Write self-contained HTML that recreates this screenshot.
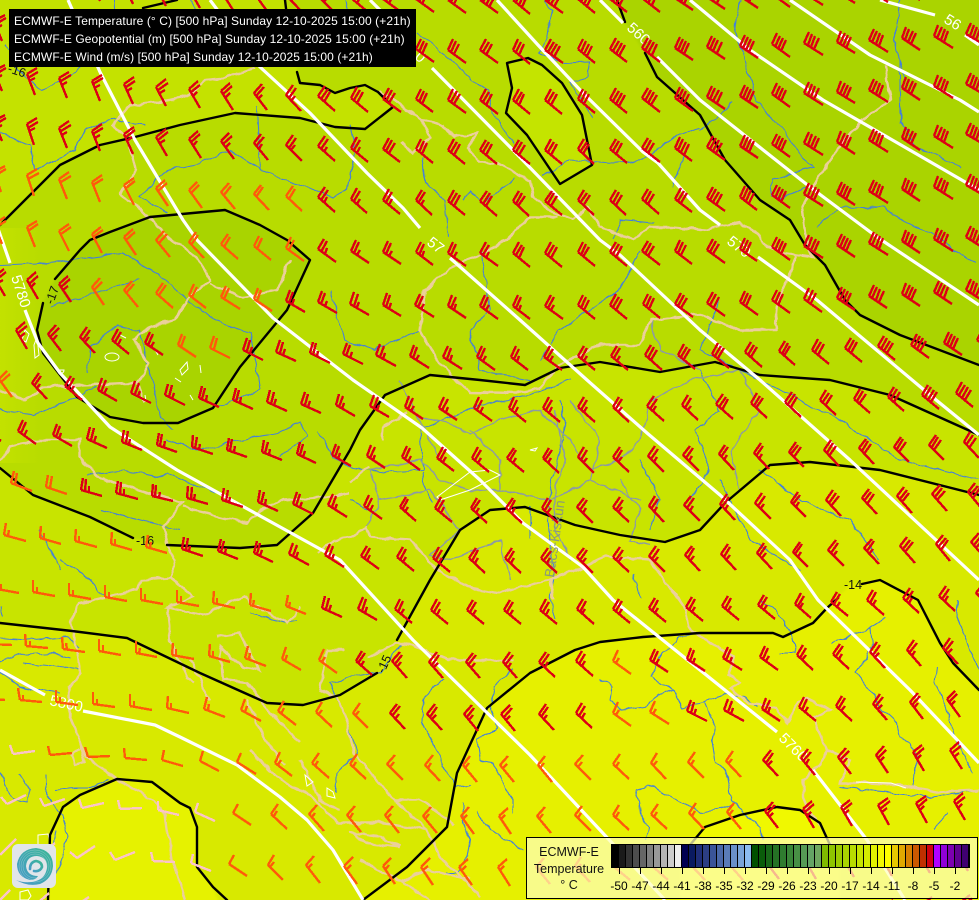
<!DOCTYPE html>
<html lang="en">
<head>
<meta charset="utf-8">
<title>ECMWF-E 500 hPa</title>
<style>
html,body{margin:0;padding:0;background:#e6f000}
#m{position:relative;width:979px;height:900px;overflow:hidden;font-family:"Liberation Sans",sans-serif}
#m>svg{position:absolute;left:0;top:0}
#t{position:absolute;left:9px;top:9px;width:407px;height:58px;background:#000;color:#fff;font-size:12px;line-height:18px;box-sizing:border-box;padding:3px 0 0 5px;white-space:nowrap;letter-spacing:.085px}
#l{position:absolute;left:526px;top:837px;width:452px;height:62px;box-sizing:border-box;border:1px solid #000;background:rgba(255,255,190,.72)}
#n{position:absolute;left:0;top:6px;width:84px;text-align:center;font-size:12.5px;line-height:16.5px;color:#111}
#b{position:absolute;left:85px;top:7px;height:22px;display:flex;outline:1px solid #000}
#b i{display:block;width:6px;height:22px;border-right:1px solid #000}
#k span{position:absolute;top:29px;width:1px;height:7px;background:#000}
#v span{position:absolute;top:41px;width:30px;text-align:center;font-size:12px;line-height:14px;color:#000}
</style>
</head>
<body>
<div id="m">
<svg width="979" height="900" viewBox="0 0 979 900" xmlns="http://www.w3.org/2000/svg">
<defs>
<filter id="sm" x="-10%" y="-10%" width="120%" height="120%"><feGaussianBlur stdDeviation="1.2"/></filter>
<filter id="wg" filterUnits="userSpaceOnUse" x="-20" y="-20" width="1020" height="940" color-interpolation-filters="sRGB"><feTurbulence type="fractalNoise" baseFrequency=".08" numOctaves="2" seed="4" result="n"/><feDisplacementMap in="SourceGraphic" in2="n" scale="6" xChannelSelector="R" yChannelSelector="G"/></filter>
<linearGradient id="lg" x1="0" y1="1" x2="1" y2="0"><stop offset="0" stop-color="#4a98cc"/><stop offset=".5" stop-color="#3fa8b0"/><stop offset="1" stop-color="#3cb894"/></linearGradient>
<linearGradient id="lf" x1="0" y1="0" x2="1" y2="0"><stop offset="0" stop-color="#dcee00" stop-opacity=".3"/><stop offset="1" stop-color="#dcee00" stop-opacity="0"/></linearGradient>
</defs>
<rect width="979" height="900" fill="#e6f000"/>
<g filter="url(#sm)">
<path fill="#d8e900" d="M1000,710L979,690 953,663 940,643 918,600 880,580 850,585 827,608 813,623 783,637 773,633 700,633 643,637 600,642 575,650 530,673 487,708 457,773 447,827 407,867 363,900 363,930 -30,930 -30,-30 1010,-30Z"/>
<path fill="#e6f200" d="M48,930L50,835 63,807 80,795 117,779 152,782 180,803 190,808 197,827 197,867 213,887 230,930Z"/>
<path fill="#f0f800" d="M680,860L705,827 740,815 777,807 800,810 820,823 840,860 840,930 680,930Z"/>
<path fill="#c8e400" d="M1010,500L979,495 880,470 810,462 770,465 725,503 700,530 665,542 620,535 575,525 525,507 490,510 460,530 430,580 397,640 377,673 340,695 303,705 267,703 200,673 127,638 72,631 0,623 -30,620 -30,-30 1010,-30Z"/>
<path fill="#b8dc00" d="M1010,445L979,435 890,395 830,380 760,375 715,362 660,372 600,362 560,368 525,385 480,380 430,375 385,395 360,430 350,450 313,513 277,545 240,548 167,545 133,538 90,517 33,495 0,468 -30,450 -30,-30 1010,-30Z"/>
<path fill="#c4e200" d="M-30,245L0,225 30,195 60,165 100,145 135,137 180,125 235,113 300,118 335,127 365,129 393,107 378,92 365,85 335,93 300,83 288,25 285,-30 -30,-30Z"/>
<path fill="#aad400" d="M612,-30L617,0 625,22 645,53 657,77 700,115 725,160 760,200 790,220 805,245 825,265 845,300 860,315 900,335 979,365 1010,375 1010,-30Z"/>
<path fill="#a9d400" d="M55,279L80,250 90,240 110,232 150,217 225,210 260,225 287,240 310,260 287,310 240,367 213,408 178,423 143,423 110,417 77,397 43,353 37,330 43,303Z"/>
<path fill="#c4e400" d="M507,63L528,58 542,65 562,83 582,115 592,165 560,184 527,135 506,113 512,88Z"/>
</g>
<rect x="0" y="228" width="40" height="235" fill="url(#lf)"/>
<g filter="url(#wg)" fill="none">
<g stroke="#4480d8" stroke-width="1.1">
<path d="M5,45L18,70 40,90 65,80 90,60M0,133L30,145 35,170 75,150 85,130 110,120 145,125M257,107L260,170 230,150 200,163 167,170 140,197 167,213M260,170L287,180 333,197 347,190 355,150 350,125"/>
<path d="M0,265L50,263 123,253 157,273 187,300 220,323 250,333 257,367 260,390 217,407M50,307L103,290 140,280M88,373L90,347 117,325 140,330 147,367 153,383 160,417 173,430M0,410L33,415 77,397 97,387"/>
<path d="M167,440L200,450 240,440 277,433 300,422 307,437 280,457M87,475L123,470 160,477 167,473 200,487 223,495M318,430L333,457 350,467M757,100L780,127 803,157 813,167 772,180 770,195 780,200 810,185"/>
<path d="M900,60L900,123 917,147 960,167M700,130L717,117 733,103M817,227L840,207 883,208 907,223 933,233 953,250 977,263"/>
<path d="M417,33L443,53 470,78 488,90 493,113 507,133 515,145M543,0L552,10 547,37 540,53 563,63 590,62 588,77 570,83 593,117M422,157L425,183 445,200 448,237M463,200L470,190 483,203 515,177M543,177L570,160 613,163 643,160 677,135 700,128M613,240L620,220 653,223M672,187L685,153"/>
<path d="M350,467L383,472 423,470 420,430 480,405 530,395 570,380M560,400L565,430 555,470 550,490 548,520 553,570 550,600 555,620M423,472L425,490 433,503M350,500L373,512M370,537L410,540M530,507L530,540M633,573L640,597"/>
<path d="M600,680L612,687 610,700 623,710 643,707 653,700 660,695 673,690 650,677 663,653 680,637 700,632M673,690L683,708 703,703 723,693 743,697 757,707M705,703L715,727 712,740 715,760 728,777 732,800 743,813 760,827 763,840"/>
<path d="M637,790L648,785 683,803 700,813 733,805M637,790L640,813 648,827 645,840M760,600L777,610 790,633 795,653 780,653M885,618L870,628 840,640 833,643M870,628L872,647 857,673 870,690 883,710 897,723 900,737 917,753 913,787"/>
<path d="M937,667L935,683 947,707 953,733 973,773M958,600L957,617 967,643 979,670M840,787L933,797 979,790M947,813L933,830M330,683L350,677 380,672 403,643M330,683L347,723 357,753 337,773 335,793M443,677L423,700 422,723 433,743 447,773 457,787 470,785"/>
<path d="M463,803L463,823 470,840 467,857 457,873 447,873M477,810L490,830 523,850M513,670L493,687 490,707 497,727 477,740 480,760 493,763 513,800 513,813M60,560L83,573 97,590 110,598M0,607L3,617M250,613L263,617 283,623 297,620"/>
<path d="M0,638L27,640 67,637 80,647M0,662L20,655 53,653 70,658M23,663L57,667 80,670M0,672L20,687 60,693M740,0L735,30 750,80 757,100M900,0L895,40 905,80M480,250L490,310 470,330 480,370 530,380M640,250L620,290 560,330 540,360"/>
<path d="M700,370L720,410 695,430 710,470 690,500M720,300L700,350 760,380 840,420 900,460 979,480M640,460L660,500 650,530M30,20L15,45M115,0L118,50M345,0L350,25M190,0L215,40M330,290L345,340 375,350 420,330M760,470L800,500 850,520 880,560M720,480L750,540 800,570M40,530L60,570M100,510L140,520 180,530"/>
<path d="M55,830L50,855M0,772L5,785 15,800 28,802 30,790 20,775M45,775L45,790 53,805 62,815 68,835 62,860 55,875M55,790L75,788 90,788 110,780"/>
</g>
<g stroke="#8b9aa6" stroke-width="1.4">
<path d="M417,415L455,425 470,435 500,420 540,410 570,440 590,470 620,460 640,440M370,470L420,460 440,480 470,490 500,490 550,500 590,480 640,500M380,500L430,490 460,530 430,555 450,560 500,540 510,580M470,430L500,460 500,490M555,410L565,460 555,490 555,530 570,560M620,480L640,510 630,540 650,545"/>
<path d="M640,440L650,400 690,380 740,370 760,410 730,450 740,490M650,320L660,350 700,370M590,480L600,440 570,400M400,380L417,415 440,460M365,530L380,500 370,470"/>
</g>
<g stroke="#ebcf9b" stroke-width="2.4">
<path d="M255,68L225,78 205,80 190,95 170,100 130,105 113,125 125,135 130,150 135,170 120,195 135,205 145,215 173,240 183,247 197,257 210,280 187,300 173,320 150,327 133,340 148,363 138,383 145,403M0,390L25,400 45,387 93,385 138,383M290,260L277,290 243,297 210,283"/>
<path d="M0,460L10,447 40,440 80,440 80,457 97,477 147,493 183,503 163,527 170,553 175,560 170,578 140,580 137,590 80,603 70,623 77,647 80,673 70,687 70,717 87,757 117,779 152,800 165,815 172,860 185,900M183,507L213,515 247,523 257,513 283,500 323,497 350,493M317,553L333,540 350,537 367,527 370,537 410,540 437,570 467,587 500,593 547,580 583,567 603,557 650,560 685,610 690,630 717,647 735,657 728,675 740,682 730,688 747,703 777,707 787,723 797,703 807,698 830,710 813,717 827,750 850,760 840,783 867,783 900,785 937,792 979,790M827,750L820,763 803,780 803,797 810,813 827,837 835,850M550,580L553,600"/>
<path d="M350,482L363,470 370,467M382,440L383,427 407,413M457,380L470,392 517,393 540,388 560,365 600,345 640,345 650,320 700,315 740,330 775,330 778,300 787,280 797,255 783,253 763,243 757,233 740,223 700,230 673,227 650,227 633,240 600,227 587,207 573,220 553,213 533,197 530,180 497,163 480,163 468,148 477,133 453,137 443,125 422,120 430,137 413,153 400,143M422,120L395,100 380,90M557,217L530,217 507,240 490,250 450,268 425,290 420,330 440,365 457,380M797,255L813,257 807,243 802,207 817,180 837,150 863,120 890,100 885,65"/>
<path d="M170,578L193,597 167,608 203,615 243,597 270,615 287,623 300,607M167,608L170,640 187,677 193,683M217,637L240,633 260,670 243,667 220,647 223,680 247,683 280,723 300,743M250,750L280,780 313,797 337,823 380,823 427,830 440,857 457,873 480,897M360,760L387,793 427,830M327,650L320,690 337,697 347,723 353,753 360,760M343,650L327,650M367,657L397,643 413,645 447,660 473,660 513,660M350,832L380,837 400,847 367,843 350,832M300,760L320,800 340,810M360,860L400,880 430,870 470,880"/>
<path d="M247,700L262,735 285,765M190,660L205,690 210,700M395,800L420,800 455,825M400,880L430,900M80,740L85,762 75,765 72,755 80,748"/>
</g>
</g>
<g fill="none" stroke="#fff" stroke-width="1">
<path d="M437,497L470,472 490,470 500,475 490,480 470,490 440,500Z"/><path d="M105,357a7,4 0 1 0 14,0a7,4 0 1 0-14,0Z"/>
<path d="M22,340l3,-10 4,4 -3,8Z"/><path d="M34,345l3,-8 2,18 -4,3Z"/><path d="M180,370l7,-8 1,7 -6,6Z"/><path d="M530,450l7,-2 -2,3Z"/><path d="M60,370a2,3 0 1 0 4,0Z"/><path d="M120,335l6,3M155,350l3,5M200,365l1,8M175,378l6,4M145,395l1,6M190,395l3,5"/><path d="M856,782l35,1 15,5"/><path d="M305,775l8,7 -6,4ZM327,788l6,4 2,6 -8,-2Z"/><path d="M38,835l10,-1 2,8 -4,6 -8,-2ZM20,892l8,-2 3,6 -3,4 -8,0Z"/>
</g>
<g fill="none" stroke="#000" stroke-width="2.4" stroke-linejoin="round" stroke-linecap="round">
<path d="M0,225L30,195 60,165 100,145 135,137 180,125 235,113 300,118 335,127 365,129 393,107 378,92 365,85 350,88 335,93 320,85 300,83 297,72M143,8L177,0M285,0L288,25"/>
<path d="M55,279L80,250 90,240 110,232 150,217 225,210 260,225 287,240 310,260 287,310 240,367 213,408 178,423 143,423 110,417 77,397 43,353 37,330 43,303"/>
<path d="M507,63L528,58 542,65 562,83 582,115 592,165 560,184 527,135 506,113 512,88Z"/>
<path d="M617,0L625,22M645,53L657,77 700,115 725,160 760,200 790,220 805,245 825,265 845,300 860,315 900,335 979,365"/>
<path d="M979,435L890,395 830,380 760,375 715,362 660,372 600,362 560,368 525,385 480,380 430,375 385,395 360,430 350,450 313,513 277,545 240,548 167,545M133,538L90,517 33,495 0,468"/>
<path d="M979,495L880,470 810,462 770,465 725,503 700,530 665,542 620,535 575,525 525,507 490,510 460,530 430,580 397,640M377,673L340,695 303,705 267,703 200,673 127,638 72,631 0,623"/>
<path d="M979,690L953,663 940,643 918,600 880,580 862,584M838,598L827,608 813,623 783,637 773,633 700,633 643,637 600,642 575,650 530,673 487,708 457,773 447,827 407,867 363,900"/>
<path d="M48,900L50,835 63,807 80,795 117,779 152,782 180,803 190,808 197,827 197,867 213,887 227,900M690,845L705,827 740,815 777,807 800,810 820,823 830,845"/>
</g>
<g fill="none" stroke="#fff" stroke-width="3.2" stroke-linejoin="round">
<path d="M0,670L45,695M83,711L155,725 180,737 237,765 280,797 307,820 333,850 363,900"/>
<path d="M68,0L100,72 135,140 183,220 197,240 273,318 353,380 422,428 480,480 523,523 583,567 613,600 777,732M813,770L867,840 905,900"/>
<path d="M-5,220L10,263M25,310L38,343 60,373 110,427 177,470 340,560 413,640 530,755 600,830 665,900"/>
<path d="M210,0L260,67 310,113 367,173 403,208 420,228M450,258L520,320 587,380 647,433 720,495 790,560 818,600 910,690 979,763"/>
<path d="M370,0L395,25M432,68L510,147 600,240 620,255 700,330 760,380 850,460 979,580"/>
<path d="M497,0L538,45 582,92 643,152 658,163 700,210 720,225M758,257L817,300 930,395 979,435"/>
<path d="M600,0L623,23M657,57L700,100 810,187 877,237 979,305M690,0L750,50 823,100 979,190M790,0L870,55 960,100 979,112M880,0L935,15M965,35L979,45"/>
</g>
<g font-family="Liberation Sans,sans-serif" font-size="15" fill="#fff">
<text transform="translate(49,705) rotate(12)">5800</text>
<text transform="translate(778,739) rotate(45)">5760</text>
<text transform="translate(11,277) rotate(72)">5780</text>
<text transform="translate(426,244) rotate(38)">57</text>
<text transform="translate(726,243) rotate(38)">570</text>
<text transform="translate(626,29) rotate(42)">560</text>
<text transform="translate(943,22) rotate(32)">56</text>
<text transform="translate(414,58) rotate(42)">0</text>
</g>
<g font-family="Liberation Sans,sans-serif" font-size="12.5" fill="#111">
<text x="136" y="545">-16</text>
<text x="844" y="589">-14</text>
<text transform="translate(384,674) rotate(-65)">-15</text>
<text transform="translate(53,305) rotate(-70)">-17</text>
<text transform="translate(7,72) rotate(18)">-16</text>
<text transform="translate(554,578) rotate(-82)" fill="#8a9a7c" font-size="14">Bács-Kiskun</text>
</g>
<g id="w" fill="none" stroke-width="2.4" shape-rendering="crispEdges"><path id="wr" stroke="#dd0014"/><path id="wo" stroke="#ff5a0a"/><path id="wp" stroke="#fbc4c8"/></g>
<rect x="12" y="844" width="44" height="44" rx="6" fill="#e1e5ea"/>
<path fill="url(#lg)" d="M16,880Q28,887 40,884Q52,879 53,866Q53,850 36,848Q20,849 17,864Q17,877 30,880Q36,880 38,876Q27,876 26,866Q27,856 37,856Q47,857 47,867Q46,878 36,881Q26,884 16,880Z"/>
<g fill="none" stroke="#e1e5ea" stroke-width=".4" opacity=".6">
<circle cx="35" cy="866" r="12"/><circle cx="35" cy="866" r="14"/><circle cx="35" cy="866" r="16"/>
</g>
<path fill="none" stroke="url(#lg)" stroke-width="2.6" stroke-linecap="round" d="M30,869Q30,862 36,861Q42,862 42,867Q40,872 34,871"/>
</svg>
<div id="t">ECMWF-E Temperature (° C) [500 hPa] Sunday 12-10-2025 15:00 (+21h)<br>ECMWF-E Geopotential (m) [500 hPa] Sunday 12-10-2025 15:00 (+21h)<br>ECMWF-E Wind (m/s) [500 hPa] Sunday 12-10-2025 15:00 (+21h)</div>
<div id="l">
<div id="n">ECMWF-E<br>Temperature<br>° C</div>
<div id="b"><i style="background:#000"></i><i style="background:#1a1a1a"></i><i style="background:#333"></i><i style="background:#4d4d4d"></i><i style="background:#666"></i><i style="background:#808080"></i><i style="background:#999"></i><i style="background:#b3b3b3"></i><i style="background:#ccc"></i><i style="background:#eee"></i><i style="background:#000050"></i><i style="background:#0a1a60"></i><i style="background:#1f2e78"></i><i style="background:#2c3e84"></i><i style="background:#3a5498"></i><i style="background:#4a68a8"></i><i style="background:#5a7cb8"></i><i style="background:#6a90c8"></i><i style="background:#7aa4d8"></i><i style="background:#8cbcf0"></i><i style="background:#005000"></i><i style="background:#0a5c0a"></i><i style="background:#186818"></i><i style="background:#257225"></i><i style="background:#2f7c2f"></i><i style="background:#3a8638"></i><i style="background:#489045"></i><i style="background:#569a55"></i><i style="background:#64a464"></i><i style="background:#6fa860"></i><i style="background:#80bb00"></i><i style="background:#8ec400"></i><i style="background:#9ccc00"></i><i style="background:#aad400"></i><i style="background:#b8dc00"></i><i style="background:#c6e400"></i><i style="background:#d4ec00"></i><i style="background:#e2f200"></i><i style="background:#f4f800"></i><i style="background:#ffff00"></i><i style="background:#e8c800"></i><i style="background:#e0a800"></i><i style="background:#d88000"></i><i style="background:#cc5800"></i><i style="background:#c03000"></i><i style="background:#d00010"></i><i style="background:#b000ff"></i><i style="background:#9000d8"></i><i style="background:#7c00b0"></i><i style="background:#600090"></i><i style="background:#400070"></i></div>
<div id="k"><span style="left:92px"></span><span style="left:113px"></span><span style="left:134px"></span><span style="left:155px"></span><span style="left:176px"></span><span style="left:197px"></span><span style="left:218px"></span><span style="left:239px"></span><span style="left:260px"></span><span style="left:281px"></span><span style="left:302px"></span><span style="left:323px"></span><span style="left:344px"></span><span style="left:365px"></span><span style="left:386px"></span><span style="left:407px"></span><span style="left:428px"></span></div>
<div id="v"><span style="left:77px">-50</span><span style="left:98px">-47</span><span style="left:119px">-44</span><span style="left:140px">-41</span><span style="left:161px">-38</span><span style="left:182px">-35</span><span style="left:203px">-32</span><span style="left:224px">-29</span><span style="left:245px">-26</span><span style="left:266px">-23</span><span style="left:287px">-20</span><span style="left:308px">-17</span><span style="left:329px">-14</span><span style="left:350px">-11</span><span style="left:371px">-8</span><span style="left:392px">-5</span><span style="left:413px">-2</span></div>
</div>
</div>
<script>
(function(){
var X=[0,100,200,300,400,500,600,700,800,900,979],
Y=[80,200,290,350,450,500,555,605,655,710,760,805,850],
T=[[70,68,60,45,35,38,38,35,33,32,30],[72,66,52,42,40,42,42,38,34,32,30],[60,54,35,30,32,36,38,36,34,33,33],[65,38,28,25,30,36,40,40,40,38,35],[30,21,18,26,35,40,44,45,45,45,45],[18,14,16,28,40,42,45,45,46,48,50],[14,15,22,30,40,44,45,45,45,48,50],[6,10,10,22,38,39,40,40,40,42,45],[4,10,13,32,50,47,38,30,42,49,48],[4,6,20,42,47,53,37,25,38,52,56],[-10,-2,28,40,47,52,45,45,50,60,60],[-28,-8,28,48,50,55,42,46,58,62,60],[-45,-30,28,52,55,58,40,45,58,62,60]];
function ix(a,v){var i=0;while(i<a.length-2&&v>a[i+1])i++;var f=(v-a[i])/(a[i+1]-a[i]);return[i,Math.max(0,Math.min(1,f))]}
function ang(x,y){var p=ix(X,x),q=ix(Y,y),i=p[0],j=q[0],f=p[1],g=q[1];return (T[j][i]*(1-f)+T[j][i+1]*f)*(1-g)+(T[j+1][i]*(1-f)+T[j+1][i+1]*f)*g}
function col(x,y){
 if((y>780&&x<225)||(y>=745&&x<40))return'p';var o=false;
 if(y>150&&y<260)o=x<300;
 else if(y>=260&&y<320)o=x>=60&&x<260;
 else if(y>=320&&y<375)o=x>150&&x<225;
 else if(y>=375&&y<420)o=x<10;
 else if(y>=480&&y<530)o=x<70;
 else if(y>=530&&y<580)o=x<165;
 else if(y>=580&&y<630)o=x<310;
 else if(y>=630&&y<680)o=x<340||(x>590&&x<630);
 else if(y>=680&&y<730)o=x<380||(x>590&&x<665);
 else if(y>=730)o=x<745;
 return o?'o':'r';
}
function fe(c,x,y){
 if(c=='p')return[9];
 if(c=='o'){if(y>=730&&x<250)return[10];return y>=530?[12,6]:[12,12];}
 if(x-1.1*y>480)return[12,12,12,12];
 if(x-1.3*y>170)return[12,12,12];
 return[12,12,6];
}
var D={r:'',o:'',p:''},R=[0,50,100,150,201,253,306,357,408,458,508,558,610,662,714,765,816,867,918];
function n(v){return Math.round(v)}
function sp(y){return y<300?32.4:y<420?32.4+(y-300)*.021:34.9+(y-420)*.0078}
function xr(y){return y<300?610:y<420?610+(y-300)*.025:613}
function kk(y0){return y0<=458?1.2e-4:y0>=765?5e-5:1.2e-4-(y0-458)*2.28e-7}
R.forEach(function(y0){
 for(var i=-21;i<13;i++){
  var x=612+i*34,y=y0;
  for(var z=0;z<3;z++){
   x=xr(y)+i*sp(y);
   var dx=x-490;y=y0-(dx<0?kk(y0):7e-5)*dx*dx;
  }
  if(x<-25||x>1000||y<-25||y>925)continue;
  var a=ang(Math.max(0,Math.min(979,x)),y)*Math.PI/180,ca=Math.cos(a),sa=Math.sin(a),b=a-100*Math.PI/180,cb=Math.cos(b),sb=Math.sin(b);
  var c=col(x,y),d='M'+n(x)+','+n(y)+'L'+n(x+22*ca)+','+n(y+22*sa);
  fe(c,x,y).forEach(function(L,j){
   var px=x+3.8*j*ca,py=y+3.8*j*sa;
   d+='M'+n(px)+','+n(py)+'L'+n(px+L*cb)+','+n(py+L*sb);
  });
  D[c]+=d;
 }
});
document.getElementById('wr').setAttribute('d',D.r);
document.getElementById('wo').setAttribute('d',D.o);
document.getElementById('wp').setAttribute('d',D.p);
})();
</script>
</body>
</html>
